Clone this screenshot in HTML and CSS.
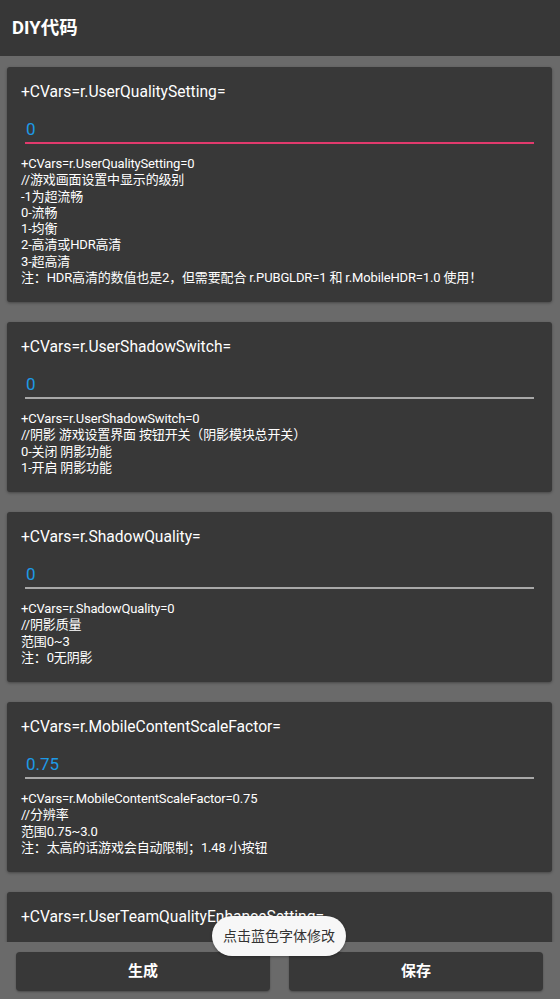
FILE: index.html
```html
<!DOCTYPE html>
<html>

<head>
    <meta charset="UTF-8">
    <title>DIY代码</title>
    <link rel="stylesheet" href="styles.css">
</head>

<body>
    <div class="page">
        <div class="bar">DIY代码</div>
        <div class="list">
            <div class="card">
                <div class="key">+CVars=r.UserQualitySetting=</div>
                <div class="field focus">0</div>
                <div class="desc">+CVars=r.UserQualitySetting=0<br>//游戏画面设置中显示的级别<br>-1为超流畅<br>0-流畅<br>1-均衡<br>2-高清或HDR高清<br>3-超高清<br>注：HDR高清的数值也是2，但需要配合 r.PUBGLDR=1 和 r.MobileHDR=1.0 使用！</div>
            </div>
            <div class="card">
                <div class="key">+CVars=r.UserShadowSwitch=</div>
                <div class="field">0</div>
                <div class="desc">+CVars=r.UserShadowSwitch=0<br>//阴影 游戏设置界面 按钮开关（阴影模块总开关）<br>0-关闭 阴影功能<br>1-开启 阴影功能</div>
            </div>
            <div class="card">
                <div class="key">+CVars=r.ShadowQuality=</div>
                <div class="field">0</div>
                <div class="desc">+CVars=r.ShadowQuality=0<br>//阴影质量<br>范围0~3<br>注：0无阴影</div>
            </div>
            <div class="card">
                <div class="key">+CVars=r.MobileContentScaleFactor=</div>
                <div class="field">0.75</div>
                <div class="desc">+CVars=r.MobileContentScaleFactor=0.75<br>//分辨率<br>范围0.75~3.0<br>注：太高的话游戏会自动限制；1.48 小按钮</div>
            </div>
            <div class="card">
                <div class="key">+CVars=r.UserTeamQualityEnhanceSetting=</div>
                <div class="field">0</div>
                <div class="desc">+CVars=r.UserTeamQualityEnhanceSetting=0</div>
            </div>
        </div>
        <div class="foot">
            <div class="btn">生成</div>
            <div class="btn">保存</div>
        </div>
        <!-- 提示气泡 -->
        <div class="toast">点击蓝色字体修改</div>
    </div>
</body>

</html>
```

FILE: styles.css
```css
* {
    margin: 0;
    padding: 0;
    box-sizing: border-box;
}
body {
    background-color: #6a6a6a;
    font-family: Roboto, "Noto Sans CJK SC", sans-serif;
    color: #fff;
}
.page {
    position: relative;
    display: flex;
    flex-direction: column;
    height: 999px;
    overflow: hidden;
}
/* 顶部标题栏 */
.bar {
    flex: none;
    height: 56px;
    padding-left: 12px;
    line-height: 56px;
    background-color: #373737;
    font-size: 18.5px;
    font-weight: bold;
}
.list {
    flex: 1;
    overflow: hidden;
    padding: 11px 8px 0 7px;
}
.card {
    margin-bottom: 20px;
    padding: 16px 14px 16px;
    background-color: #383838;
    border-radius: 3px;
    box-shadow: 0 1px 3px rgba(0, 0, 0, 0.35);
}
.key {
    font-size: 15.6px;
    line-height: 18px;
}
/* 蓝色的可修改数值 */
.field {
    margin: 16px 4px 0;
    height: 27px;
    padding: 2px 0 0 1px;
    font-size: 17px;
    line-height: 20px;
    color: #1d9ae6;
    border-bottom: 2px solid #a8a8a8;
}
.field.focus {
    border-bottom-color: #e23a6d;
}
.desc {
    margin-top: 12px;
    font-size: 13px;
    line-height: 16.25px;
    letter-spacing: -0.15px;
}
.foot {
    flex: none;
    display: flex;
    gap: 19px;
    height: 57px;
    padding: 10px 17px 8px 16px;
}
.btn {
    flex: 1;
    background-color: #383838;
    border-radius: 4px;
    text-align: center;
    line-height: 39px;
    font-size: 15px;
    font-weight: bold;
    box-shadow: 0 1px 2px rgba(0, 0, 0, 0.3);
}
.toast {
    position: absolute;
    left: 212px;
    top: 916px;
    width: 134px;
    height: 40px;
    line-height: 40px;
    text-align: center;
    background-color: #f7f7f7;
    color: #333;
    font-size: 14px;
    border-radius: 20px;
    box-shadow: 0 1px 3px rgba(0, 0, 0, 0.3);
}
```
